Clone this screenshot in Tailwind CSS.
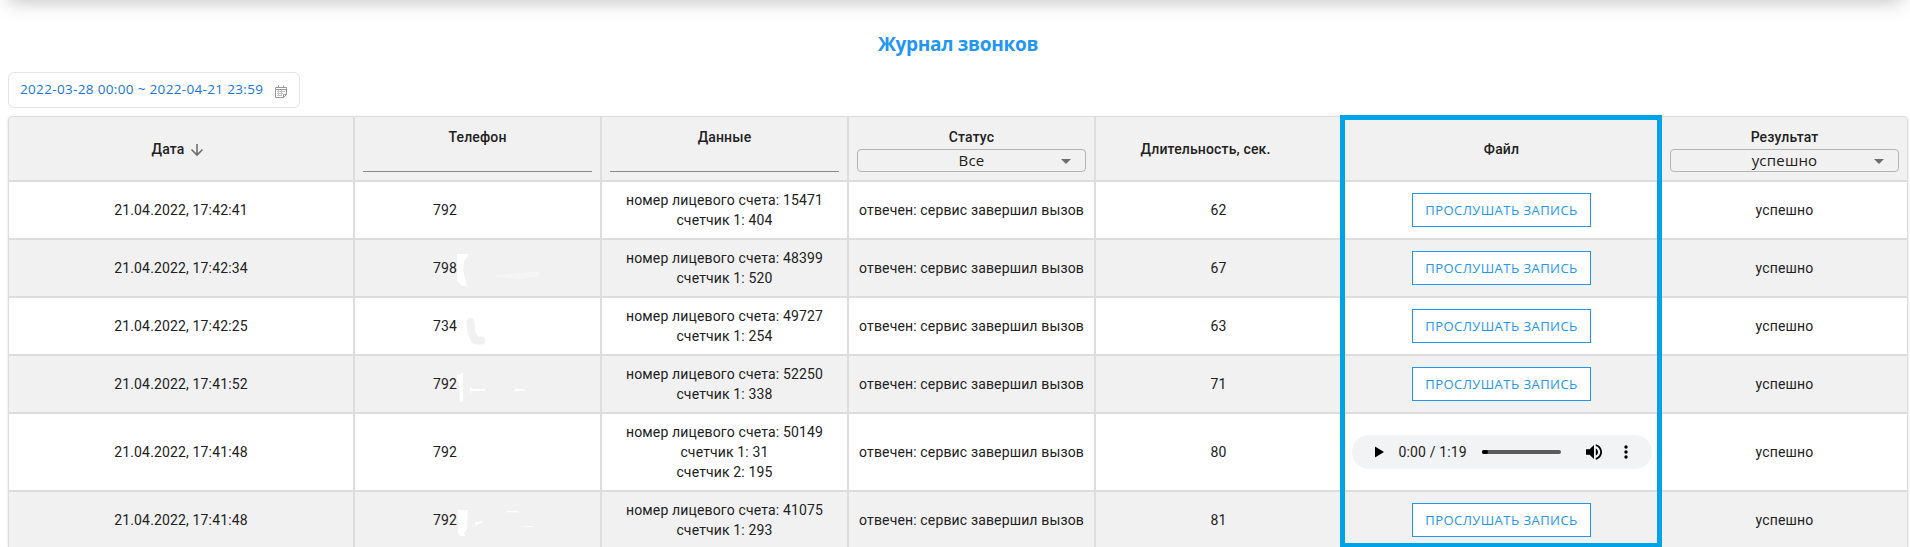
<!DOCTYPE html>
<html lang="ru">
<head>
<meta charset="utf-8">
<title>Журнал звонков</title>
<script src="https://cdn.jsdelivr.net/npm/@tailwindcss/browser@4"></script>
</head>
<body class="h-[547px] overflow-hidden bg-white font-['Roboto',sans-serif] text-sm tracking-[0.15px] text-[#212121]">
<header class="mx-2 -mt-10 h-10 bg-white shadow-[0_1px_20px_0_rgba(0,0,0,0.26)]"></header>
<h1 class="flex h-[72px] items-center justify-center pt-[17px] pl-[6px] font-['Open_Sans',sans-serif] text-[19px] font-bold tracking-[-0.3px] text-[#2196f3]">Журнал звонков</h1>
<div class="ml-2 flex h-9 w-[292px] items-center rounded-[6px] border border-[#e5e5e5] pl-[11px] font-['Open_Sans',sans-serif] text-[13.5px] tracking-[0.34px] text-[#1675e0]">
  <span class="w-[255px] whitespace-nowrap">2022-03-28 00:00 ~ 2022-04-21 23:59</span>
  <svg class="mt-0.5 h-[13px] w-3" viewBox="0 0 12 13" fill="none" stroke="#999"><path d="M9 12.500H.5v-10h11v7M.5 4.500h11M3.500.5v2M8.500.5v2"/><path d="M2 6.500h8M2 8.500h6M2 10.500h4M3.500 5v6M6.500 5v6" stroke="#c2c2c2"/><path d="M8.500 12.500v-3h3z"/></svg>
</div>
<main id="table" class="relative mt-2 ml-2 grid w-[1900px] grid-cols-[346px_247px_247px_247px_247px_319px_247px] rounded shadow-[0_1px_3px_rgba(0,0,0,0.12),0_1px_1px_rgba(0,0,0,0.1)]">
  <div class="flex h-[65px] items-center justify-center gap-1.5 rounded-tl border border-[#ddd] bg-[#f1f1f1] pr-1.5 font-medium"><span>Дата</span>
    <svg class="mt-0.5 h-[14px] w-[14px]" viewBox="0 0 14 14" fill="none" stroke="#6e6e6e" stroke-width="1.600"><path d="M7 1v11M1.500 6.500L7 12l5.500-5.500"/></svg></div>
  <div class="border border-[#ddd] bg-[#f1f1f1] px-2 pt-[10px] text-center font-medium leading-5">Телефон<div class="h-[25px] border-b border-[#8a8a8a]"></div></div>
  <div class="border border-[#ddd] bg-[#f1f1f1] px-2 pt-[10px] text-center font-medium leading-5">Данные<div class="h-[25px] border-b border-[#8a8a8a]"></div></div>
  <div class="border border-[#ddd] bg-[#f1f1f1] px-2 pt-[10px] text-center font-medium leading-5">Статус
    <div class="mt-[2px] flex h-[23px] items-center rounded border border-[#b4b4b4] font-['Open_Sans',sans-serif] text-[15px] font-normal tracking-[0.2px]"><span class="w-full pb-0.5">Все</span><i class="-ml-6 mt-0.5 mr-[12px] border-x-[5px] border-t-[5px] border-x-transparent border-t-[#6e6e6e]"></i></div></div>
  <div class="flex items-center justify-center border border-[#ddd] bg-[#f1f1f1] pr-[26px] font-medium">Длительность, сек.</div>
  <div class="flex items-center justify-center border border-[#ddd] bg-[#f1f1f1] font-medium">Файл</div>
  <div class="rounded-tr border border-[#ddd] bg-[#f1f1f1] px-2 pt-[10px] text-center font-medium leading-5">Результат
    <div class="mt-[2px] flex h-[23px] items-center rounded border border-[#b4b4b4] font-['Open_Sans',sans-serif] text-[15px] font-normal tracking-[0.2px]"><span class="w-full pb-0.5">успешно</span><i class="-ml-6 mt-0.5 mr-[12px] border-x-[5px] border-t-[5px] border-x-transparent border-t-[#6e6e6e]"></i></div></div>
</main>
<div class="pointer-events-none absolute top-[115px] left-[1340px] h-[433px] w-[322px] border-[5px] border-[#00a2e8]"></div>
<script>
const marks = {
  1: '<svg class="absolute top-0 left-0 h-14 w-[245px]" viewBox="355 240 245 56" fill="#fff"><path d="M457 254h12l-5 7-1 9 4 16h-5l-5-5z"/><path d="M491 276l48-5v5l-20 3z" opacity=".3"/></svg>',
  2: '<svg class="absolute top-0 left-0 h-14 w-[245px]" viewBox="355 298 245 56" fill="none" stroke="#f1f1f1" stroke-width="8" stroke-linecap="round" stroke-linejoin="round"><path d="M470.500 322l1 11 4 7.500h6"/></svg>',
  3: '<svg class="absolute top-0 left-0 h-14 w-[245px]" viewBox="355 356 245 56" fill="#fff"><path d="M457 375l6-2v28l-3 1-1-20h-2zM470 387l3 2h12v2h-14l-1 5zM515 389h9l2 2h-12z"/></svg>',
  5: '<svg class="absolute top-0 left-0 h-14 w-[245px]" viewBox="355 492 245 56" fill="#fff"><path d="M458 510h10l-1 19-3 4 1 3h-4l-3-2zM475 522l9-.500-9 4.500zM506 511h11l4 1.200h-14zM519 527l13-1 1 1z"/></svg>'
};
const rows = [
  ['17:42:41', '792', ['15471', '404'], 62],
  ['17:42:34', '798', ['48399', '520'], 67],
  ['17:42:25', '734', ['49727', '254'], 63],
  ['17:41:52', '792', ['52250', '338'], 71],
  ['17:41:48', '792', ['50149', '31', '195'], 80],
  ['17:41:48', '792', ['41075', '293'], 81]
];
const button = '<button class="h-[34px] w-[179px] border border-[#2196f3] bg-white font-[\'Open_Sans\',sans-serif] text-[13px] tracking-[0.46px] whitespace-nowrap text-[#2196f3]">ПРОСЛУШАТЬ ЗАПИСЬ</button>';
const player = `<div class="flex h-[34px] w-[300px] items-center rounded-full bg-[#f1f3f4] pl-[23px]">
  <svg class="h-3 w-[9px]" viewBox="0 0 9 12"><path d="M0 0.500v11L9 6z"/></svg>
  <span class="ml-[15px] w-[83px] whitespace-nowrap">0:00 / 1:19</span>
  <div class="h-1 w-[79px] rounded-full bg-[#5b5c5c]"><div class="h-1 w-1.5 rounded-full bg-black"></div></div>
  <svg class="ml-[25px] h-4 w-4" viewBox="3 3 18 18"><path d="M3 9v6h4l5 5V4L7 9H3zm13.500 3c0-1.770-1.020-3.290-2.500-4.030v8.050c1.480-.730 2.500-2.250 2.500-4.020zM14 3.230v2.060c2.890.860 5 3.540 5 6.710s-2.110 5.850-5 6.710v2.060c4.010-.910 7-4.490 7-8.770s-2.990-7.860-7-8.770z"/></svg>
  <svg class="ml-[22px] h-[14px] w-1" viewBox="0 0 4 14"><circle cx="2" cy="2" r="1.700"/><circle cx="2" cy="7" r="1.700"/><circle cx="2" cy="12" r="1.700"/></svg>
</div>`;
document.getElementById('table').insertAdjacentHTML('beforeend', rows.map(([time, phone, data, sec], i) => {
  const cell = (i % 2 ? 'bg-[#f1f1f1]' : 'bg-white') + ' flex items-center justify-center border border-[#ddd] whitespace-nowrap leading-5';
  return `<div class="${cell} ${i === 4 ? 'h-[78px]' : 'h-[58px]'}">21.04.2022, ${time}</div>
  <div class="${cell} relative"><span class="w-full pl-[78px]">${phone}</span>${marks[i] || ''}</div>
  <div class="${cell} text-center"><div><p>номер лицевого счета: ${data[0]}</p>${data.slice(1).map((v, n) => `<p>счетчик ${n + 1}: ${v}</p>`).join('')}</div></div>
  <div class="${cell}">отвечен: сервис завершил вызов</div>
  <div class="${cell}">${sec}</div>
  <div class="${cell}">${i === 4 ? player : button}</div>
  <div class="${cell}">успешно</div>`;
}).join(''));
</script>
</body>
</html>
